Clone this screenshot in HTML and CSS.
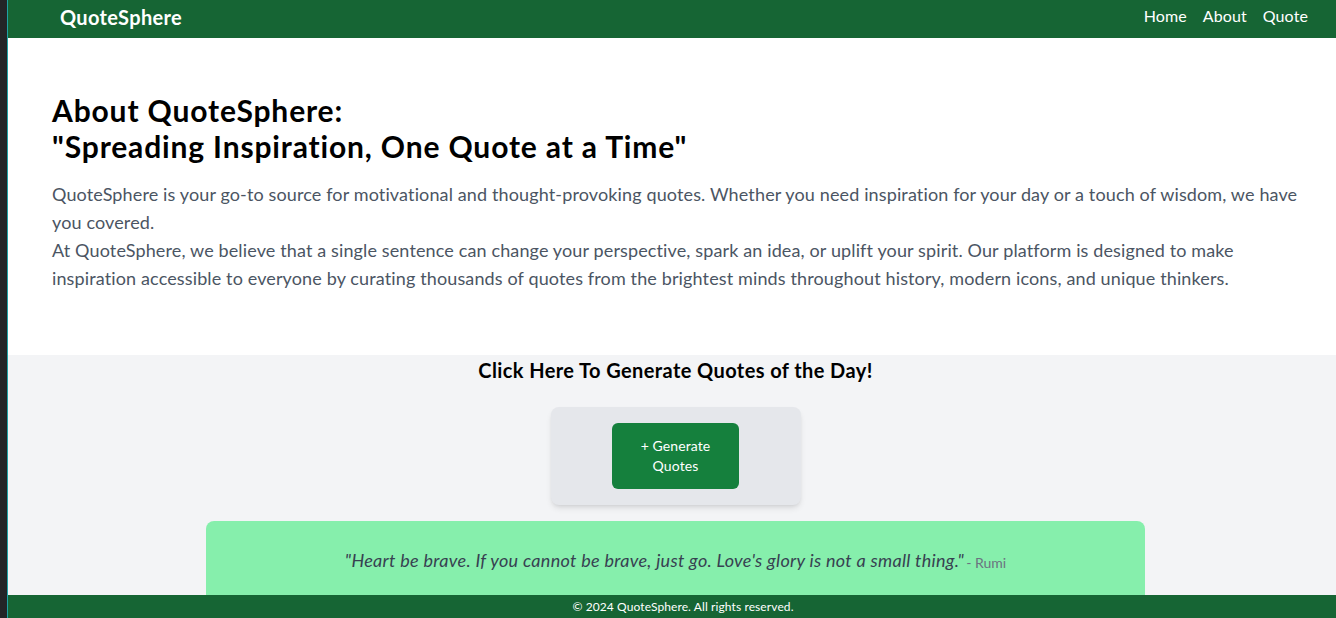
FILE: index.html
```html
<!DOCTYPE html>
<html lang="en">
<head>
<meta charset="utf-8">
<title>QuoteSphere</title>
<link rel="stylesheet" href="styles.css">
</head>
<body>
<div class="frame">
  <div class="frame-edge"></div>
  <div class="page">
    <nav class="navbar">
      <a class="logo" href="#">QuoteSphere</a>
      <ul class="nav-links">
        <li><a href="#">Home</a></li>
        <li><a href="#">About</a></li>
        <li><a href="#">Quote</a></li>
      </ul>
    </nav>

    <section class="about">
      <h1 class="about-title">About QuoteSphere:<br>"Spreading Inspiration, One Quote at a Time"</h1>
      <p class="about-text">QuoteSphere is your go-to source for motivational and thought-provoking quotes. Whether you need inspiration for your day or a touch of wisdom, we have you covered.</p>
      <p class="about-text">At QuoteSphere, we believe that a single sentence can change your perspective, spark an idea, or uplift your spirit. Our platform is designed to make inspiration accessible to everyone by curating thousands of quotes from the brightest minds throughout history, modern icons, and unique thinkers.</p>
    </section>

    <section class="generator">
      <h2 class="generator-title">Click Here To Generate Quotes of the Day!</h2>
      <div class="generator-card">
        <button class="generate-btn" type="button">+ Generate Quotes</button>
      </div>
      <div class="quote-box">
        <p class="quote"><span class="quote-text">"Heart be brave. If you cannot be brave, just go. Love's glory is not a small thing."</span><span class="quote-author">- Rumi</span></p>
      </div>
    </section>

    <footer class="footer">© 2024 QuoteSphere. All rights reserved.</footer>
  </div>
</div>
</body>
</html>
```
FILE: styles.css
```css
* { box-sizing: border-box; }

html, body {
  margin: 0;
  padding: 0;
  height: 100%;
}

body {
  font-family: "Lato", "Liberation Sans", sans-serif;
  color: #111827;
  background: #f3f4f6;
  overflow: hidden;
}

.frame {
  display: flex;
  min-height: 100%;
}

.frame-edge {
  flex: 0 0 8px;
  background: #232527;
  border-right: 1px solid #1fa2a5;
}

.page {
  flex: 1;
  display: flex;
  flex-direction: column;
  min-width: 0;
  background: #f3f4f6;
}

/* Navbar */
.navbar {
  height: 38px;
  background: #166534;
  display: flex;
  align-items: center;
  justify-content: space-between;
  padding: 0 28px 0 52px;
}

.logo {
  color: #ffffff;
  font-weight: 700;
  font-size: 20px;
  letter-spacing: 0.33px;
  text-decoration: none;
  line-height: 28px;
  margin-top: -5px;
}

.nav-links {
  list-style: none;
  margin: 0;
  padding: 0;
  display: flex;
  gap: 16px;
  margin-top: -7px;
}

.nav-links a {
  color: #ffffff;
  text-decoration: none;
  font-size: 16px;
  letter-spacing: 0.1px;
  line-height: 24px;
}

/* About */
.about {
  background: #ffffff;
  padding: 54px 28px 63px 44px;
}

.about-title {
  margin: 0 0 16px;
  font-size: 30px;
  line-height: 36px;
  font-weight: 700;
  letter-spacing: 0.85px;
  color: #000000;
}

.about-text {
  margin: 0;
  font-size: 18px;
  line-height: 28px;
  letter-spacing: 0.13px;
  color: #4b5563;
}

/* Generator */
.generator {
  flex: 1;
  display: flex;
  flex-direction: column;
  align-items: center;
  padding: 1px 0 0 7px;
}

.generator-title {
  margin: 0;
  font-size: 20px;
  line-height: 28px;
  font-weight: 700;
  letter-spacing: 0.4px;
  color: #000000;
}

.generator-card {
  margin-top: 23px;
  width: 250px;
  height: 98px;
  padding: 16px 0;
  display: flex;
  justify-content: center;
  background: #e5e7eb;
  border-radius: 8px;
  box-shadow: 0 4px 6px -1px rgba(0, 0, 0, 0.1), 0 2px 4px -2px rgba(0, 0, 0, 0.1);
}

.generate-btn {
  width: 127px;
  height: 66px;
  padding: 0 20px;
  border: 0;
  border-radius: 6px;
  background: #15803d;
  color: #ffffff;
  font-family: inherit;
  font-size: 14px;
  line-height: 20px;
  letter-spacing: 0.1px;
}

.quote-box {
  margin-top: 16px;
  width: 939px;
  background: #86efac;
  border-radius: 8px;
  padding: 25px 24px 30px;
  text-align: center;
}

.quote {
  margin: 0;
  line-height: 28px;
}

.quote-text {
  font-style: italic;
  font-size: 18px;
  letter-spacing: 0.3px;
  color: #374151;
}

.quote-author {
  font-size: 14px;
  color: #6b7280;
  margin-left: 2px;
  position: relative;
  top: 1px;
}

/* Footer */
.footer {
  position: fixed;
  left: 8px;
  right: 0;
  bottom: 0;
  height: 23px;
  background: #166534;
  color: #ffffff;
  font-size: 12px;
  line-height: 24px;
  letter-spacing: 0.1px;
  text-align: center;
  padding-left: 22px;
}
```
